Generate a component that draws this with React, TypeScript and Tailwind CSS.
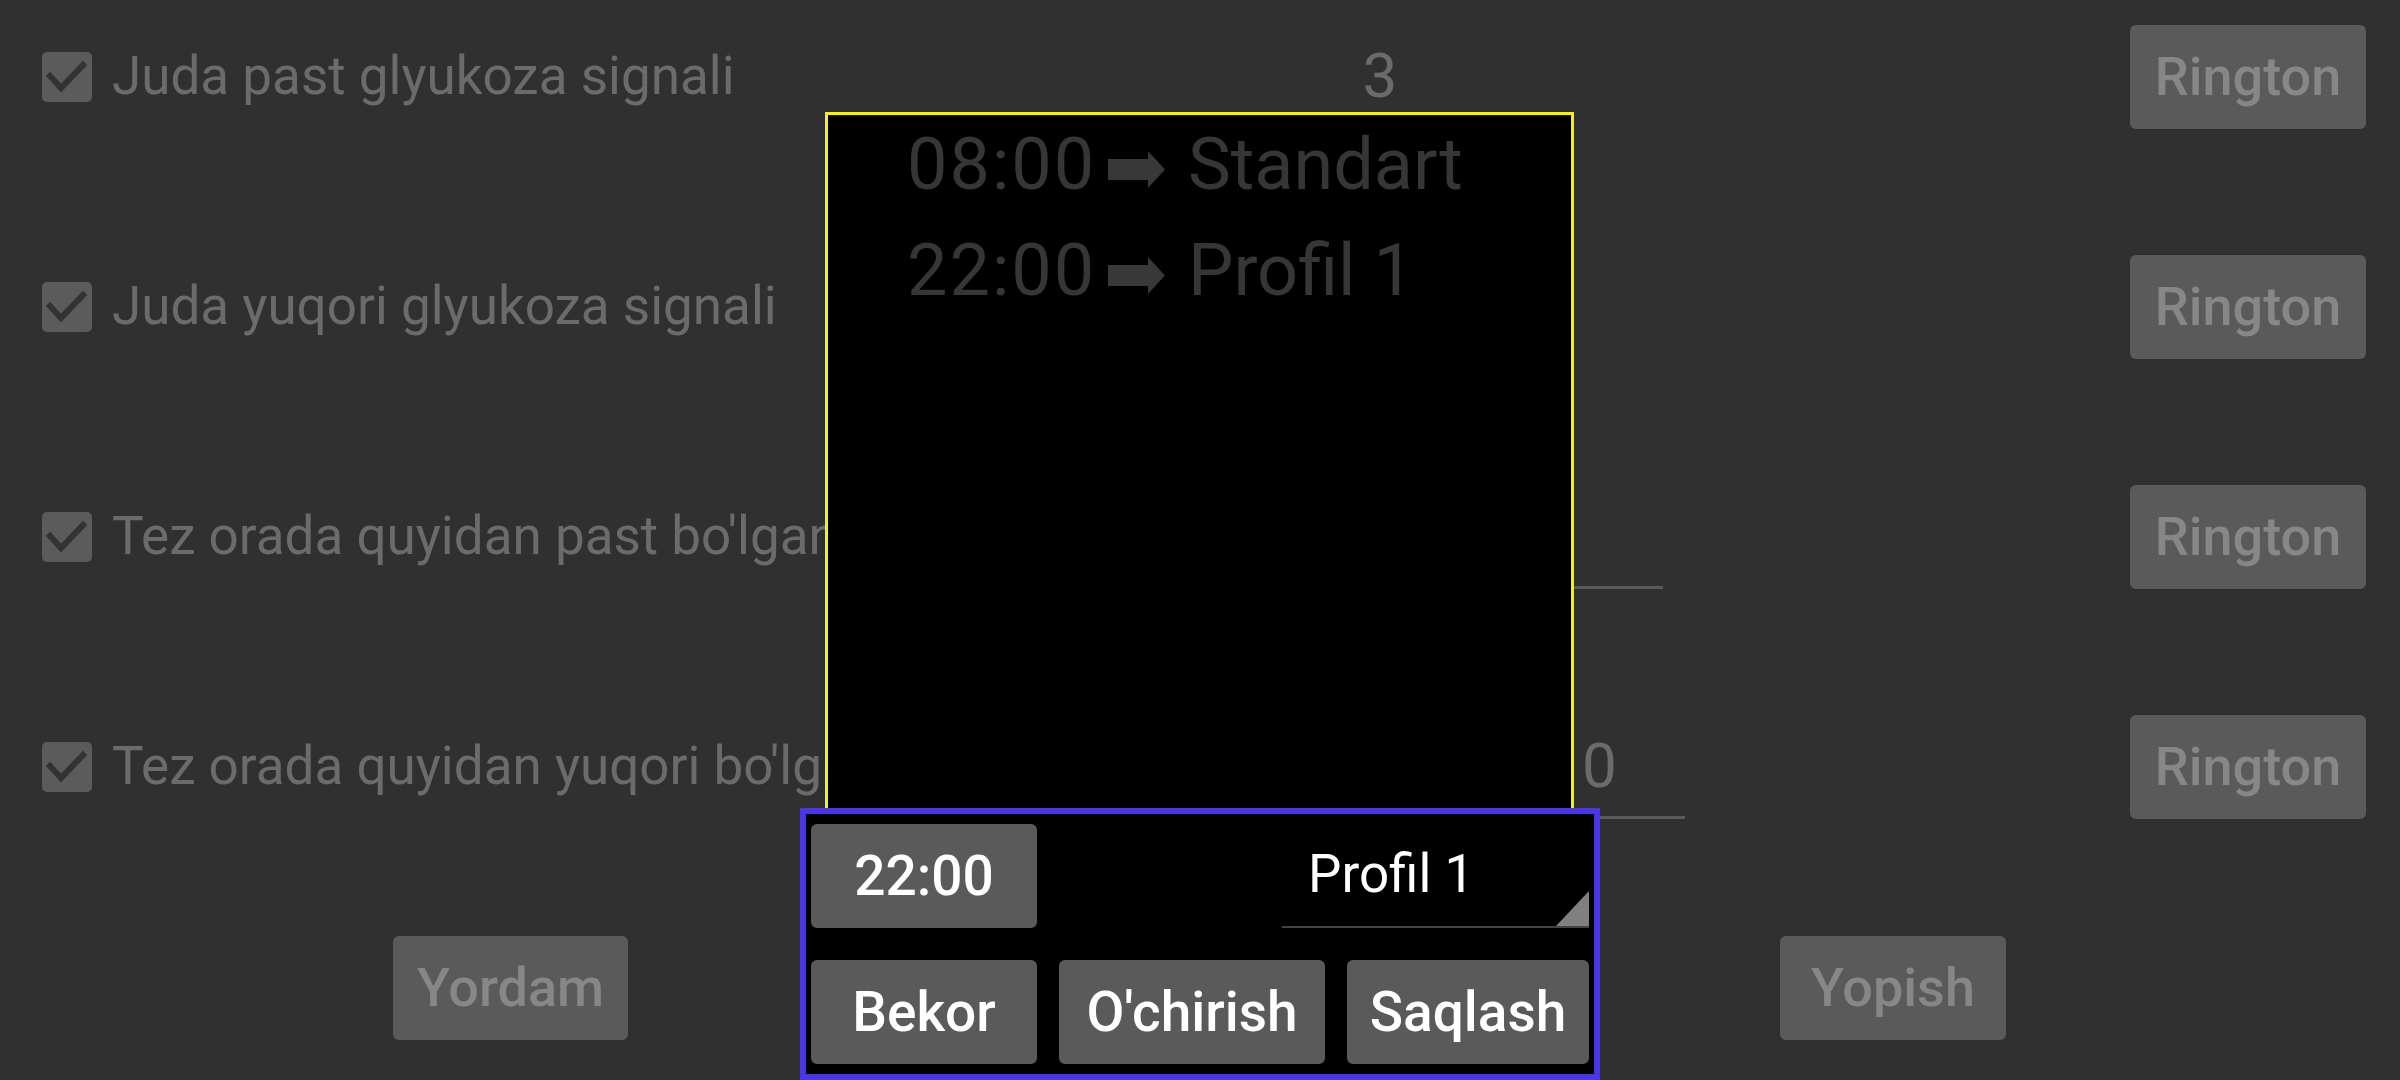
import React from "react";

type AlarmRow = {
  label: string;
  value: string;
  fieldLeft: number;
  fieldWidth: string;
};

const rows: AlarmRow[] = [
  { label: "Juda past glyukoza signali", value: "3", fieldLeft: 0, fieldWidth: "w-[300px]" },
  { label: "Juda yuqori glyukoza signali", value: "14", fieldLeft: 0, fieldWidth: "w-[300px]" },
  { label: "Tez orada quyidan past bo'lganda signal", value: "15", fieldLeft: 1, fieldWidth: "w-[300px]" },
  { label: "Tez orada quyidan yuqori bo'lganda signal", value: "10", fieldLeft: 2, fieldWidth: "w-[206px]" },
];

// left block widths decide where the value field starts
const leftBlock = ["w-[1230px]", "w-[1363px]", "w-[1479px]"];

function CheckBox() {
  return (
    <div className="w-[50px] h-[50px] shrink-0 rounded-[5px] bg-[#5b5b5b] flex items-center justify-center">
      <svg width="50" height="50" viewBox="0 0 50 50">
        <polyline
          points="8,24 19,36 41,13"
          fill="none"
          stroke="#333333"
          strokeWidth="6"
          strokeLinecap="square"
        />
      </svg>
    </div>
  );
}

function GreyButton(props: { label: string }) {
  return (
    <button className="h-[104px] min-w-[226px] px-6 rounded-[6px] bg-[#5a5a5a] text-[#878787] text-[54px] font-medium leading-none">
      {props.label}
    </button>
  );
}

function DialogButton(props: { label: string; width: string }) {
  return (
    <button
      className={`${props.width} h-[104px] rounded-[6px] bg-[#5a5a5a] text-white text-[55px] font-medium leading-none`}
    >
      {props.label}
    </button>
  );
}

function Arrow() {
  return (
    <svg width="57" height="37" viewBox="0 0 57 37" className="mt-[8px] shrink-0">
      <polygon points="0,8 40,8 40,0 57,18.5 40,37 40,29 0,29" fill="#383838" />
    </svg>
  );
}

function ScheduleLine(props: { time: string; profile: string }) {
  return (
    <div className="flex items-center h-[100px] text-[72px] text-[#363636]">
      <span className="w-[201px] shrink-0 tracking-[2px]">{props.time}</span>
      <Arrow />
      <span className="ml-[23px]">{props.profile}</span>
    </div>
  );
}

export default function App() {
  return (
    <div className="relative w-[2400px] h-[1080px] overflow-hidden bg-[#303030] font-['Roboto',sans-serif]">
      <div className="flex flex-col pt-[25px] gap-[126px]">
        {rows.map((row) => (
          <div key={row.label} className="flex items-center h-[104px]">
            <div
              className={`${leftBlock[row.fieldLeft]} shrink-0 flex items-center pl-[42px] gap-[20px] whitespace-nowrap`}
            >
              <CheckBox />
              <span className="text-[53px] text-[#6b6b6b]">{row.label}</span>
            </div>
            <div
              className={`${row.fieldWidth} h-[104px] shrink-0 flex items-center justify-center border-b-[3px] border-[#5a5a5a] text-[62px] text-[#6b6b6b]`}
            >
              {row.value}
            </div>
            <div className="flex-1" />
            <div className="mr-[34px]">
              <button className="h-[104px] w-[236px] rounded-[6px] bg-[#5a5a5a] text-[#878787] text-[54px] font-medium leading-none">
                Rington
              </button>
            </div>
          </div>
        ))}
      </div>

      <div className="flex justify-between pl-[393px] pr-[394px] mt-[117px]">
        <GreyButton label="Yordam" />
        <GreyButton label="Yopish" />
      </div>

      {/* profile schedule dialog */}
      <div className="absolute left-[800px] top-[112px] w-[800px] flex flex-col">
        <div className="ml-[25px] w-[749px] h-[696px] border-[3px] border-b-0 border-[#f5f500] bg-black pl-[79px] flex flex-col gap-[6px]">
          <ScheduleLine time="08:00" profile="Standart" />
          <ScheduleLine time="22:00" profile="Profil 1" />
        </div>
        <div className="w-[800px] h-[272px] border-[6px] border-[#4b35e8] bg-black px-[5px] pt-[10px] flex flex-col gap-[32px]">
          <div className="flex justify-between">
            <DialogButton label="22:00" width="w-[226px]" />
            <div className="relative w-[307px] h-[104px] flex items-center pl-[26px] border-b-2 border-[#444444]">
              <span className="text-white text-[53px]">Profil 1</span>
              <svg width="33" height="35" viewBox="0 0 33 35" className="absolute right-0 bottom-0">
                <polygon points="33,0 33,35 0,35" fill="#808080" />
              </svg>
            </div>
          </div>
          <div className="flex justify-between">
            <DialogButton label="Bekor" width="w-[226px]" />
            <DialogButton label="O'chirish" width="w-[266px]" />
            <DialogButton label="Saqlash" width="w-[242px]" />
          </div>
        </div>
      </div>
    </div>
  );
}
